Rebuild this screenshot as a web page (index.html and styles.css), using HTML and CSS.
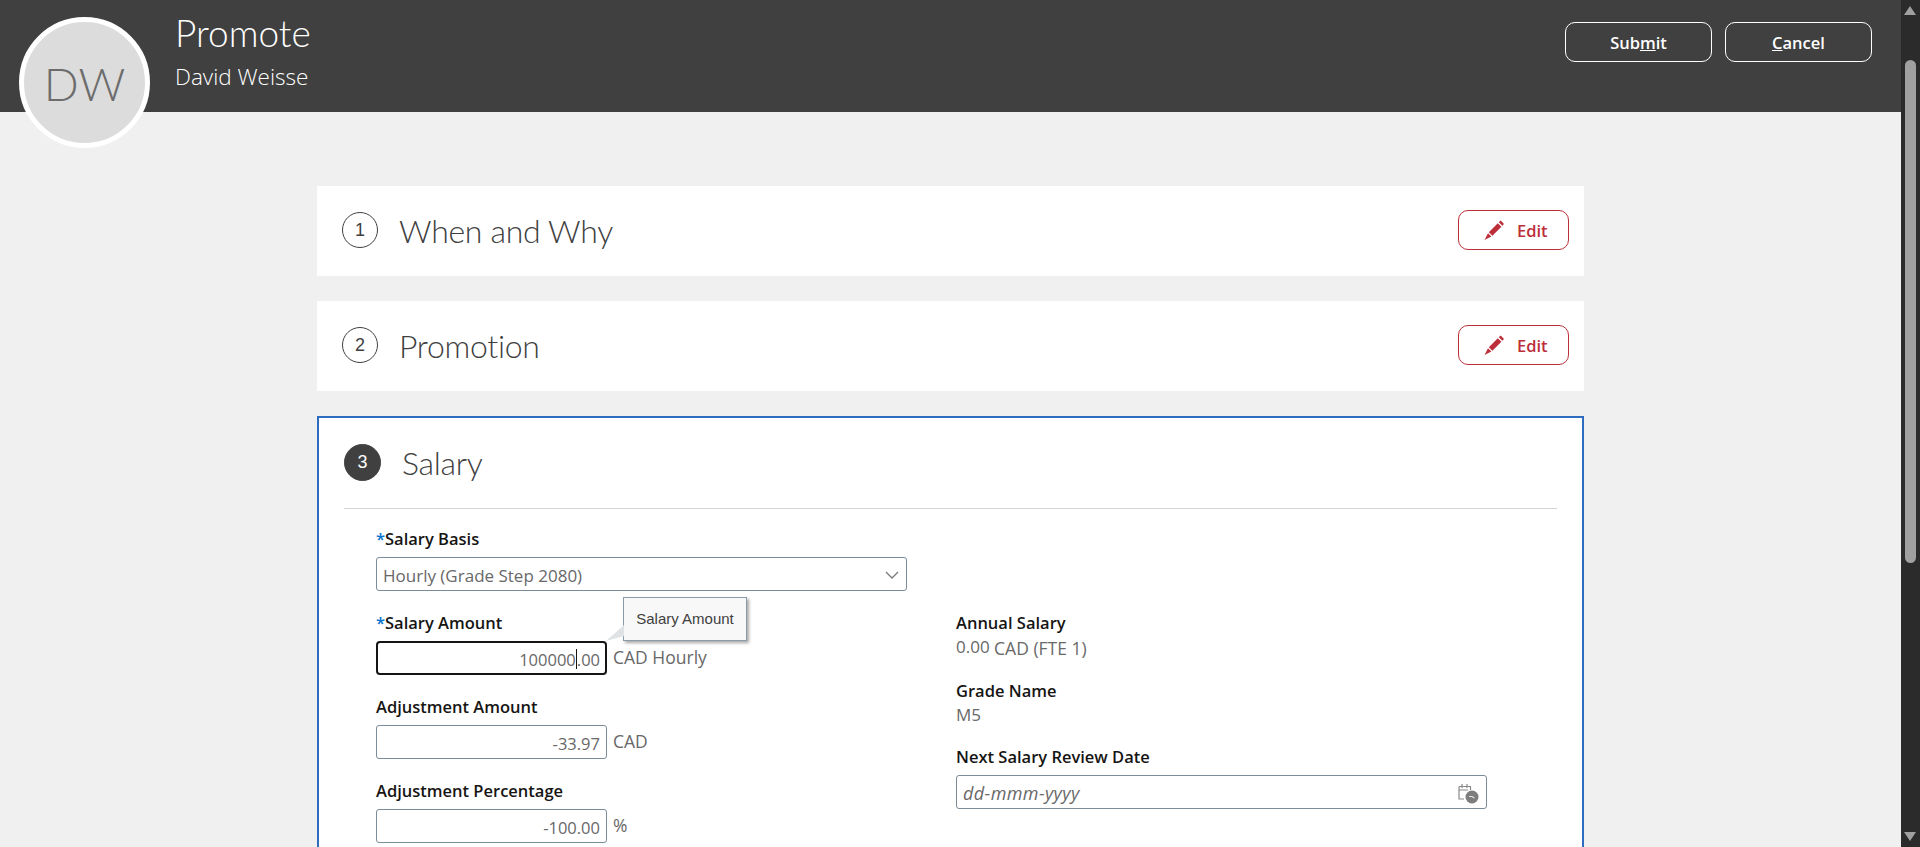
FILE: index.html
```html
<!DOCTYPE html>
<html lang="en">

<head>
  <meta charset="UTF-8" />
  <meta name="viewport" content="width=device-width, initial-scale=1.0" />
  <title>Promote</title>
  <link rel="stylesheet" href="styles.css">
</head>

<body>
  <div class="page">
    <header class="topbar">
      <div class="avatar">DW</div>
      <div class="topbar-text">
        <h1>Promote</h1>
        <p>David Weisse</p>
      </div>
      <div class="topbar-actions">
        <button class="btn-dark" type="button">Sub<u>m</u>it</button>
        <button class="btn-dark" type="button"><u>C</u>ancel</button>
      </div>
    </header>

    <main class="content">
      <section class="card">
        <span class="step">1</span>
        <h2>When and Why</h2>
        <button class="btn-edit" type="button">
          <svg class="pencil" viewBox="0 0 20 20"><path d="M4.800 12.200 13.800 3.200 17.400 6.800 8.400 15.800ZM14.800 2.200 15.800 1.200C16.300.7 16.900.7 17.400 1.200L19.400 3.200C19.900 3.700 19.900 4.300 19.400 4.800L18.400 5.800ZM4 13.200 7.400 16.600 .5 20Z" /></svg>
          Edit
        </button>
      </section>

      <section class="card">
        <span class="step">2</span>
        <h2>Promotion</h2>
        <button class="btn-edit" type="button">
          <svg class="pencil" viewBox="0 0 20 20"><path d="M4.800 12.200 13.800 3.200 17.400 6.800 8.400 15.800ZM14.800 2.200 15.800 1.200C16.300.7 16.900.7 17.400 1.200L19.400 3.200C19.900 3.700 19.900 4.300 19.400 4.800L18.400 5.800ZM4 13.200 7.400 16.600 .5 20Z" /></svg>
          Edit
        </button>
      </section>

      <section class="panel">
        <div class="panel-head">
          <span class="step step-active">3</span>
          <h2>Salary</h2>
        </div>

        <div class="form">
          <div class="field">
            <label><span class="req">*</span>Salary Basis</label>
            <div class="input input-select">
              Hourly (Grade Step 2080)
              <svg class="chevron" viewBox="0 0 14 8"><path d="M1 1 7 7 13 1" /></svg>
            </div>
          </div>

          <div class="columns">
            <div class="col">
              <div class="field amount-field">
                <label><span class="req">*</span>Salary Amount</label>
                <div class="input-row">
                  <div class="input input-num input-focus">100000<span class="caret"></span>.00</div>
                  <span class="unit">CAD&nbsp;Hourly</span>
                </div>
                <div class="tip">
                  <svg class="tip-arrow" viewBox="0 0 18 18"><path d="M18 1 0 17 18 12Z" /></svg>
                  Salary Amount
                </div>
              </div>
              <div class="field">
                <label>Adjustment Amount</label>
                <div class="input-row">
                  <div class="input input-num">-33.97</div>
                  <span class="unit">CAD</span>
                </div>
              </div>
              <div class="field">
                <label>Adjustment Percentage</label>
                <div class="input-row">
                  <div class="input input-num">-100.00</div>
                  <span class="unit">%</span>
                </div>
              </div>
            </div>

            <div class="col">
              <div class="info">
                <label>Annual Salary</label>
                <div class="value"><span class="value-num">0.00</span> <span class="value-unit">CAD (FTE 1)</span></div>
              </div>
              <div class="info">
                <label>Grade Name</label>
                <div class="value">M5</div>
              </div>
              <div class="field">
                <label>Next Salary Review Date</label>
                <div class="input input-date">
                  dd-mmm-yyyy
                  <svg class="cal" viewBox="0 0 22 22">
                    <path class="cal-line" d="M2 4.500H13.500V8M2 4.500V17H7M2 8H11M5 2V6M10 2V6" />
                    <circle cx="15" cy="15" r="6.500" />
                    <path class="cal-hand" d="M12 14.500H15L17.500 16" />
                  </svg>
                </div>
              </div>
            </div>
          </div>
        </div>
      </section>
    </main>
  </div>

  <div class="scrollbar">
    <span class="arrow-up"></span>
    <span class="thumb"></span>
    <span class="arrow-down"></span>
  </div>
</body>

</html>
```

FILE: styles.css
```css
* {
  box-sizing: border-box;
}
html, body {
  height: 100%;
}
body {
  margin: 0;
  display: flex;
  overflow: hidden;
  font-family: 'Open Sans', 'Noto Sans', sans-serif;
  font-size: 16.500px;
  color: #161513;
  background: #f0f0f0;
}
.page {
  flex: 1;
  height: 100%;
  overflow: hidden;
  position: relative;
}

/* top bar */
.topbar {
  height: 112px;
  background: #404040;
  color: white;
  display: flex;
  padding: 0 29px 0 175px;
}
.avatar {
  position: absolute;
  left: 19px;
  top: 17px;
  width: 131px;
  height: 131px;
  padding-top: 2px;
  border-radius: 50%;
  border: 5px solid white;
  background: #dcdcdc;
  color: #6c6c6c;
  font-family: 'Lato', sans-serif;
  font-weight: 300;
  font-size: 46px;
  display: flex;
  align-items: center;
  justify-content: center;
}
.topbar-text h1 {
  margin: 10px 0 0;
  font-family: 'Lato', sans-serif;
  font-weight: 300;
  font-size: 37px;
  line-height: 46px;
}
.topbar-text p {
  margin: 6px 0 0;
  font-size: 22.500px;
  font-weight: 300;
  line-height: 30px;
}
.topbar-actions {
  margin-left: auto;
  padding-top: 22px;
  display: flex;
  gap: 13px;
}
.btn-dark {
  width: 147px;
  height: 40px;
  background: transparent;
  border: 1px solid white;
  border-radius: 10px;
  color: white;
  font-family: inherit;
  font-size: 16.500px;
  font-weight: 600;
  cursor: pointer;
}

/* cards */
.content {
  width: 1267px;
  margin: 0 auto;
  padding-top: 74px;
}
.card {
  height: 90px;
  margin-bottom: 25px;
  padding: 0 15px 2px 25px;
  background: white;
  display: flex;
  align-items: center;
}
h2 {
  margin: 0 0 0 21px;
  font-family: 'Lato', sans-serif;
  font-weight: 300;
  font-size: 32px;
  letter-spacing: -0.300px;
  color: #404040;
}
.step {
  width: 36px;
  height: 36px;
  flex: none;
  border: 1px solid #404040;
  border-radius: 50%;
  font-family: 'Liberation Sans', sans-serif;
  font-size: 18px;
  color: #404040;
  display: flex;
  align-items: center;
  justify-content: center;
}
.step-active {
  width: 37px;
  height: 37px;
  background: #404040;
  color: white;
}
.btn-edit {
  margin-left: auto;
  width: 111px;
  height: 40px;
  padding-left: 25px;
  background: white;
  border: 1px solid #bc2f3a;
  border-radius: 10px;
  color: #bc2f3a;
  font-family: inherit;
  font-size: 16.500px;
  font-weight: 600;
  display: flex;
  align-items: center;
  gap: 13px;
  cursor: pointer;
}
.pencil {
  width: 20px;
  height: 20px;
  fill: #bc2f3a;
}

/* salary panel */
.panel {
  padding: 26px 25px;
  background: white;
  border: 2px solid #2f6cc0;
}
.panel-head {
  height: 65px;
  padding-bottom: 27px;
  border-bottom: 1px solid #d4d4d4;
  display: flex;
  align-items: center;
}
.form {
  padding: 18px 0 0 32px;
}
.columns {
  display: flex;
  gap: 49px;
}
.col {
  width: 531px;
}
.field {
  margin-bottom: 20px;
  position: relative;
}
.info {
  margin-bottom: 18.500px;
}
label {
  display: block;
  line-height: 24px;
  font-weight: 600;
}
.field label {
  margin-bottom: 6px;
}
.req {
  color: #0572ce;
}
.input {
  height: 34px;
  padding: 2px 6px 0;
  background: white;
  border: 1px solid #7a8b99;
  border-radius: 3px;
  color: #686868;
  display: flex;
  align-items: center;
  font-size: 17px;
  font-weight: 500;
}
.input-select {
  width: 531px;
  justify-content: space-between;
}
.chevron {
  width: 14px;
  height: 8px;
  margin-right: 1px;
  fill: none;
  stroke: #7a7a7a;
  stroke-width: 1.3;
}
.input-row {
  display: flex;
  align-items: center;
  gap: 6px;
}
.input-num {
  width: 231px;
  font-size: 16.500px;
  justify-content: flex-end;
}
.input-focus {
  border: 2px solid #161513;
  border-radius: 4px;
  padding-right: 5px;
}
.caret {
  width: 1px;
  height: 20px;
  background: #161513;
}
.unit {
  color: #686868;
  font-size: 17.500px;
  font-weight: 500;
  padding-bottom: 3px;
}
.value {
  line-height: 24px;
  color: #686868;
  font-size: 17px;
  font-weight: 500;
}
.value-num {
  position: relative;
  top: -1px;
}
.value-unit {
  position: relative;
  top: 1px;
  font-size: 17.500px;
}
.input-date {
  font-style: italic;
  font-size: 18px;
  letter-spacing: 0.400px;
  justify-content: space-between;
}
.cal {
  width: 22px;
  height: 22px;
  margin-right: 1px;
}
.cal circle {
  fill: #7d7d7d;
}
.cal-line {
  fill: none;
  stroke: #8a8a8a;
  stroke-width: 1.2;
}
.cal-hand {
  fill: none;
  stroke: #e6e6e6;
  stroke-width: 1.2;
}

/* tooltip over the amount field */
.tip {
  position: absolute;
  left: 247px;
  top: -14px;
  width: 124px;
  height: 44px;
  padding-bottom: 1px;
  background: #f8f8f8;
  border: 1px solid #8c9ba8;
  box-shadow: 2px 2px 3px rgba(0, 0, 0, 0.35);
  font-family: 'Liberation Sans', sans-serif;
  font-size: 15px;
  color: #404040;
  display: flex;
  align-items: center;
  justify-content: center;
}
.tip-arrow {
  position: absolute;
  left: -18px;
  bottom: -2px;
  width: 18px;
  height: 18px;
  fill: #dfe3e6;
}

/* scrollbar */
.scrollbar {
  width: 19px;
  flex: none;
  height: 100%;
  background: #2b2b2b;
  position: relative;
}
.thumb {
  position: absolute;
  left: 4px;
  top: 60px;
  width: 11px;
  height: 503px;
  border-radius: 6px;
  background: #a0a0a0;
}
.arrow-up, .arrow-down {
  position: absolute;
  left: 3px;
  width: 0;
  height: 0;
  border-left: 6.500px solid transparent;
  border-right: 6.500px solid transparent;
}
.arrow-up {
  top: 6px;
  border-bottom: 9px solid #a0a0a0;
}
.arrow-down {
  bottom: 6px;
  border-top: 9px solid #a0a0a0;
}
```
